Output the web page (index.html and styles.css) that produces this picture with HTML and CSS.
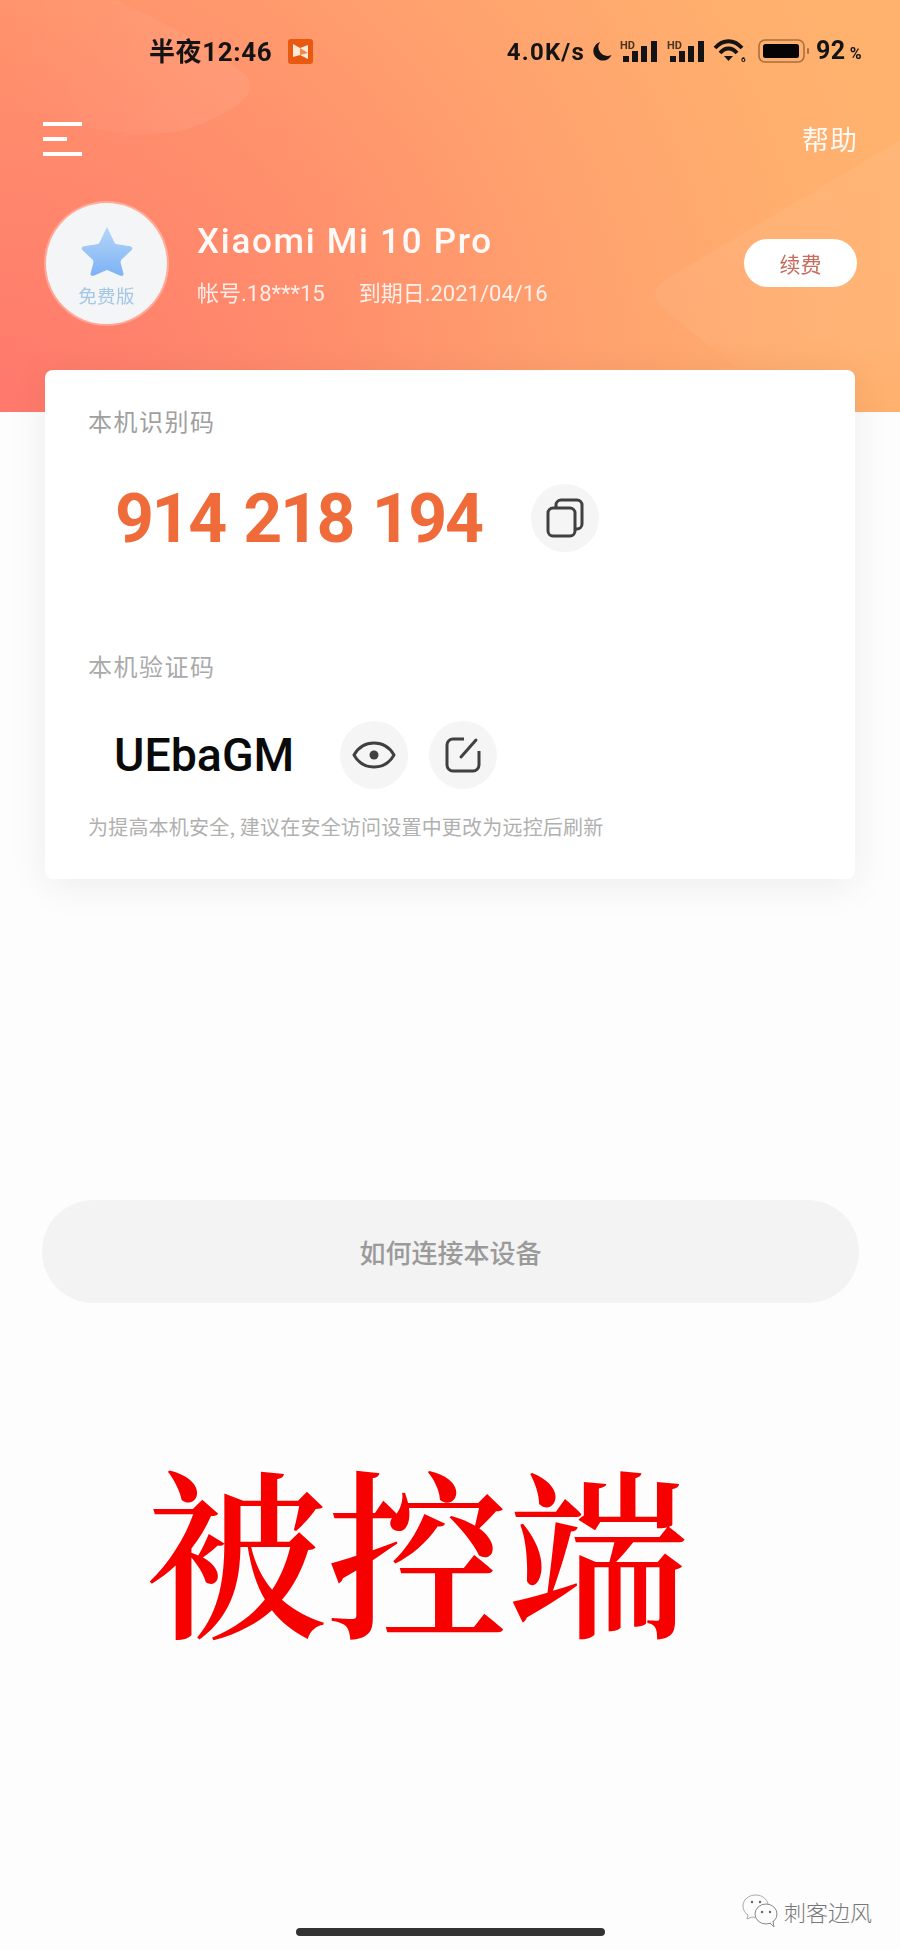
FILE: index.html
```html
<!DOCTYPE html>
<html lang="zh-CN">
<head>
<meta charset="utf-8">
<title>被控端</title>
<link rel="stylesheet" href="styles.css">
</head>
<body>
<div class="page">
  <header class="hero">
    <svg class="hero-shapes" viewBox="0 0 900 412" preserveAspectRatio="none" aria-hidden="true">
      <defs>
        <linearGradient id="blobFade" x1="0" y1="0" x2="1" y2="0"><stop offset="0" stop-color="#fff" stop-opacity="0"/><stop offset=".75" stop-color="#fff" stop-opacity=".06"/></linearGradient>
        <linearGradient id="wedgeFade" x1="0" y1="0" x2="0" y2="1"><stop offset="0" stop-color="#fff" stop-opacity=".06"/><stop offset=".7" stop-color="#fff" stop-opacity=".05"/><stop offset="1" stop-color="#fff" stop-opacity="0"/></linearGradient>
      </defs>
      <path d="M115 0 C170 25 215 50 245 75 C262 92 235 112 190 128 C150 140 80 135 0 95 L0 0Z" fill="url(#blobFade)"/>
      <path d="M900 140 L665 280 C650 292 652 300 668 312 L790 412 L900 412Z" fill="url(#wedgeFade)"/>
    </svg>
    <div class="status">
      <span class="clock">半夜12:46</span>
      <svg class="app-icon" viewBox="0 0 25 25" aria-hidden="true">
        <rect width="25" height="25" rx="3" fill="#e9590f"/>
        <path d="M5 5 L12 9 L20 6 L20 20 L12 16 L5 18Z" fill="#ffe9d8"/>
        <path d="M12 9 L20 14 L12 16Z" fill="#f08a4a"/>
      </svg>
      <div class="status-right">
        <span class="speed">4.0K/s</span>
        <svg class="moon" viewBox="0 0 20 20" aria-hidden="true"><path d="M8 1 A9.5 9.5 0 1 0 19.5 14 A9 9 0 0 1 8 1Z" fill="#141414"/></svg>
        <svg class="signal" viewBox="0 0 38 24" aria-hidden="true">
          <text x="0" y="10" class="hd">HD</text>
          <rect x="3" y="17" width="6" height="6"/><rect x="12" y="12" width="6" height="11"/><rect x="21" y="7" width="6" height="16"/><rect x="31" y="2" width="6" height="21"/>
        </svg>
        <svg class="signal" viewBox="0 0 38 24" aria-hidden="true">
          <text x="0" y="10" class="hd">HD</text>
          <rect x="3" y="17" width="6" height="6"/><rect x="12" y="12" width="6" height="11"/><rect x="21" y="7" width="6" height="16"/><rect x="31" y="2" width="6" height="21"/>
        </svg>
        <svg class="wifi" viewBox="0 0 34 24" aria-hidden="true">
          <path d="M1 9 C9 0 20 0 28 9 M6 14 C11 8 18 8 23 14" fill="none" stroke="#141414" stroke-width="3.8"/>
          <path d="M10 17 H19 L14.500 22Z" fill="#141414"/>
          <text x="27" y="23" class="wifi-n">6</text>
        </svg>
        <svg class="battery" viewBox="0 0 52 24" aria-hidden="true">
          <rect x="1" y="1" width="45" height="22" rx="6" fill="none" stroke="#a8703c" stroke-width="1.6"/>
          <rect x="5" y="5" width="36" height="14" rx="2.5" fill="#050505"/>
          <rect x="49" y="9" width="2" height="6" rx="1" fill="#a8703c"/>
        </svg>
        <span class="pct">92<small>%</small></span>
      </div>
    </div>
    <div class="topbar">
      <div class="menu" aria-hidden="true"><i></i><i class="short"></i><i></i></div>
      <span class="help">帮助</span>
    </div>
    <div class="profile">
      <div class="avatar">
        <svg class="star" viewBox="0 0 52 48" preserveAspectRatio="none" aria-hidden="true">
          <defs><linearGradient id="starFill" x1="0" y1="0" x2="0" y2="1"><stop offset="0" stop-color="#b5d6f8"/><stop offset="1" stop-color="#7cb2f6"/></linearGradient></defs>
          <path d="M26 2 L33 16 Q34 18 36 18 L49 20 Q52 21 50 23 L40 32 Q39 33 39 35 L42 46 Q42 48 39 47 L27 42 Q26 41.500 25 42 L13 47 Q10 48 10 46 L13 35 Q13 33 12 32 L2 23 Q0 21 3 20 L16 18 Q18 18 19 16Z" fill="url(#starFill)" stroke="url(#starFill)" stroke-width="1" stroke-linejoin="round"/>
        </svg>
        <span class="tier">免费版</span>
      </div>
      <div class="info">
        <div class="device">Xiaomi Mi 10 Pro</div>
        <div class="meta"><span>帐号.18***15</span><span>到期日.2021/04/16</span></div>
      </div>
      <span class="renew">续费</span>
    </div>
  </header>

  <main class="card">
    <div class="label">本机识别码</div>
    <div class="id-row">
      <span class="id-code">914 218 194</span>
      <span class="round">
        <svg class="ico" viewBox="0 0 40 40" aria-hidden="true">
          <rect x="3" y="10" width="27" height="28" rx="5" fill="none" stroke="#404040" stroke-width="3"/>
          <path d="M11 10 V7 A5 5 0 0 1 16 2 H32 A5 5 0 0 1 37 7 V26 A5 5 0 0 1 32 31 H30" fill="none" stroke="#404040" stroke-width="3"/>
        </svg>
      </span>
    </div>
    <div class="label second">本机验证码</div>
    <div class="pw-row">
      <span class="pw-code">UEbaGM</span>
      <span class="round">
        <svg class="ico eye" viewBox="0 0 44 30" aria-hidden="true">
          <path d="M2 15 C11 -1 33 -1 42 15 C33 31 11 31 2 15Z" fill="none" stroke="#404040" stroke-width="3" stroke-linejoin="round"/>
          <circle cx="22" cy="15" r="4.500" fill="#404040"/>
        </svg>
      </span>
      <span class="round">
        <svg class="ico" viewBox="0 0 40 40" aria-hidden="true">
          <path d="M21 4 H10 A6 6 0 0 0 4 10 V30 A6 6 0 0 0 10 36 H30 A6 6 0 0 0 36 30 V16" fill="none" stroke="#404040" stroke-width="3"/>
          <path d="M18 22 L33 5" fill="none" stroke="#404040" stroke-width="3" stroke-linecap="round"/>
        </svg>
      </span>
    </div>
    <p class="note">为提高本机安全, 建议在安全访问设置中更改为远控后刷新</p>
  </main>

  <div class="guide">如何连接本设备</div>
  <div class="stamp">被控端</div>

  <div class="home-bar"></div>
  <div class="watermark">
    <svg class="wx" viewBox="0 0 36 34" aria-hidden="true">
      <path d="M14 1 C6 1 1 6 1 12 C1 16 3 19 6 21 L5 25 L10 23 C11 23 12 23.500 13 23.500" fill="none" stroke="#aaa" stroke-width="1"/>
      <path d="M14 1 C20 1 25 5 26 10" fill="none" stroke="#aaa" stroke-width="1"/>
      <ellipse cx="24" cy="20" rx="11" ry="10" fill="none" stroke="#888" stroke-width="1"/>
      <path d="M28 29 L32 33 L31 27" fill="#fff" stroke="#888" stroke-width="1"/>
      <circle cx="10" cy="8" r="1.200" fill="#666"/><circle cx="18" cy="8" r="1.200" fill="#666"/>
      <circle cx="20" cy="18" r="1.200" fill="#666"/><circle cx="28" cy="18" r="1.200" fill="#666"/>
    </svg>
    <span class="wm-text">刺客边风</span>
  </div>
</div>
</body>
</html>
```

FILE: styles.css
```css
* { box-sizing: border-box; }
html, body { margin: 0; padding: 0; }
body {
  background: #fdfdfd;
  font-family: "Noto Sans CJK SC", "Noto Sans", sans-serif;
}
.page {
  position: relative;
  width: 900px;
  height: 1950px;
  overflow: hidden;
  background: #fdfdfd;
}
.hero {
  position: relative;
  height: 412px;
  padding-top: 39px;
  background: radial-gradient(circle 950px at 0 100%, #ff786c 0%, #ff8e6c 35%, #ffa06e 60%, #ffae6e 85%, #ffb26e 100%);
  filter: blur(.4px);
}
.hero-shapes { position: absolute; inset: 0; width: 100%; height: 100%; }
.status {
  position: relative;
  display: flex;
  align-items: center;
  height: 24px;
  padding: 0 38px 0 149px;
  color: #141414;
}
.clock {
  font: 700 26px/26px "Roboto", "Noto Sans CJK SC", sans-serif;
  letter-spacing: .6px;
  width: 124px;
  white-space: nowrap;
  margin-top: 2px;
}
.app-icon { width: 25px; height: 25px; margin-left: 15px; }
.status-right { margin-left: auto; display: flex; align-items: center; }
.speed { font: 700 24px/24px "Roboto", sans-serif; letter-spacing: 1.2px; margin-top: 2px; }
.moon { width: 20px; height: 20px; margin-left: 7px; }
.signal { width: 38px; height: 24px; margin-left: 9px; fill: #141414; overflow: visible; }
.moon + .signal { margin-left: 8px; }
.hd { font: 700 11px/12px "Roboto", sans-serif; fill: #4a3520; }
.wifi { width: 34px; height: 24px; margin-left: 9px; overflow: visible; }
.wifi-n { font: 700 8px "Roboto", sans-serif; fill: #141414; }
.battery { width: 52px; height: 24px; margin-left: 10px; }
.pct { font: 700 25px/24px "Roboto", sans-serif; margin-left: 6px; letter-spacing: .5px; margin-top: 3px; }
.pct small { font-size: 16px; margin-left: 4px; }

.topbar {
  position: relative;
  display: flex;
  justify-content: space-between;
  align-items: center;
  height: 36px;
  margin-top: 58px;
  padding: 0 42px 0 43px;
}
.menu { display: flex; flex-direction: column; gap: 11px; width: 39px; }
.menu i { display: block; height: 4px; background: #fff; }
.menu .short { width: 24px; }
.help { font-size: 27px; line-height: 36px; color: #fff; opacity: .92; letter-spacing: 1px; }

.profile {
  position: relative;
  display: flex;
  align-items: center;
  margin-top: 46px;
  padding: 0 43px 0 46px;
}
.avatar {
  width: 121px;
  height: 121px;
  border-radius: 50%;
  background: #f3f5f6;
  box-shadow: 0 0 0 2px rgba(255,255,255,.3);
  display: flex;
  flex-direction: column;
  align-items: center;
  padding-top: 23px;
}
.star { width: 52px; height: 50px; }
.tier { font-size: 18.500px; line-height: 24px; color: #a5c6e4; margin-top: 7px; letter-spacing: .3px; }
.info { margin-left: 30px; color: #fff; padding-top: 3px; }
.device { font: 500 35px/40px "Roboto", sans-serif; letter-spacing: 1.700px; opacity: .95; }
.meta { display: flex; gap: 34px; margin-top: 18px; font: 400 22px/28px "Roboto", "Noto Sans CJK SC", sans-serif; opacity: .85; }
.renew {
  margin-left: auto;
  margin-top: -1px;
  width: 113px;
  height: 48px;
  border-radius: 24px;
  background: #fff;
  color: #c96b5c;
  font-size: 21px;
  line-height: 48px;
  text-align: center;
}

.card {
  position: relative;
  width: 810px;
  height: 509px;
  margin: -42px 0 0 45px;
  padding: 35px 0 0 43px;
  background: #fff;
  border-radius: 8px;
  box-shadow: 0 6px 40px rgba(0,0,0,.07);
}
.label { font-size: 24px; line-height: 32px; color: #a0a0a0; letter-spacing: 1.500px; }
.label.second { margin-top: 98px; color: #aaa; }
.id-row { display: flex; align-items: center; margin-top: 47px; padding-left: 27px; }
.id-code { font: 700 68px/68px "Roboto", sans-serif; color: #f06b3a; width: 416px; white-space: nowrap; letter-spacing: -2.400px; word-spacing: 4px; position: relative; top: 1px; }
.round {
  display: flex;
  align-items: center;
  justify-content: center;
  width: 68px;
  height: 68px;
  border-radius: 50%;
  background: #f5f5f5;
}
.ico { width: 40px; height: 40px; }
.ico.eye { width: 44px; height: 30px; }
.pw-row { display: flex; align-items: center; margin-top: 39px; padding-left: 26px; gap: 21px; }
.pw-code { font: 500 46.500px/68px "Roboto", sans-serif; color: #0a0a0a; width: 205px; white-space: nowrap; }
.note { margin: 25px 0 0; font-size: 20px; line-height: 26px; color: #b0b0b0; white-space: nowrap; letter-spacing: .2px; }

.guide {
  width: 817px;
  height: 103px;
  margin: 321px 0 0 42px;
  border-radius: 52px;
  background: #f3f3f3;
  color: #9a9a9a;
  font-size: 26px;
  font-weight: 500;
  line-height: 103px;
  text-align: center;
}
.stamp {
  margin: 133px 0 0 146px;
  font-family: "Noto Serif CJK SC", "Noto Sans CJK SC", serif;
  font-size: 181px;
  line-height: 220px;
  font-weight: 600;
  color: #f60000;
  white-space: nowrap;
}
.home-bar {
  position: absolute;
  left: 296px;
  bottom: 14px;
  width: 309px;
  height: 8px;
  border-radius: 4px;
  background: #333;
}
.watermark {
  position: absolute;
  right: 28px;
  bottom: 22px;
  display: flex;
  align-items: center;
  gap: 6px;
}
.wx { width: 36px; height: 34px; }
.wm-text { font-size: 22px; line-height: 30px; font-weight: 300; color: #777; }
```
